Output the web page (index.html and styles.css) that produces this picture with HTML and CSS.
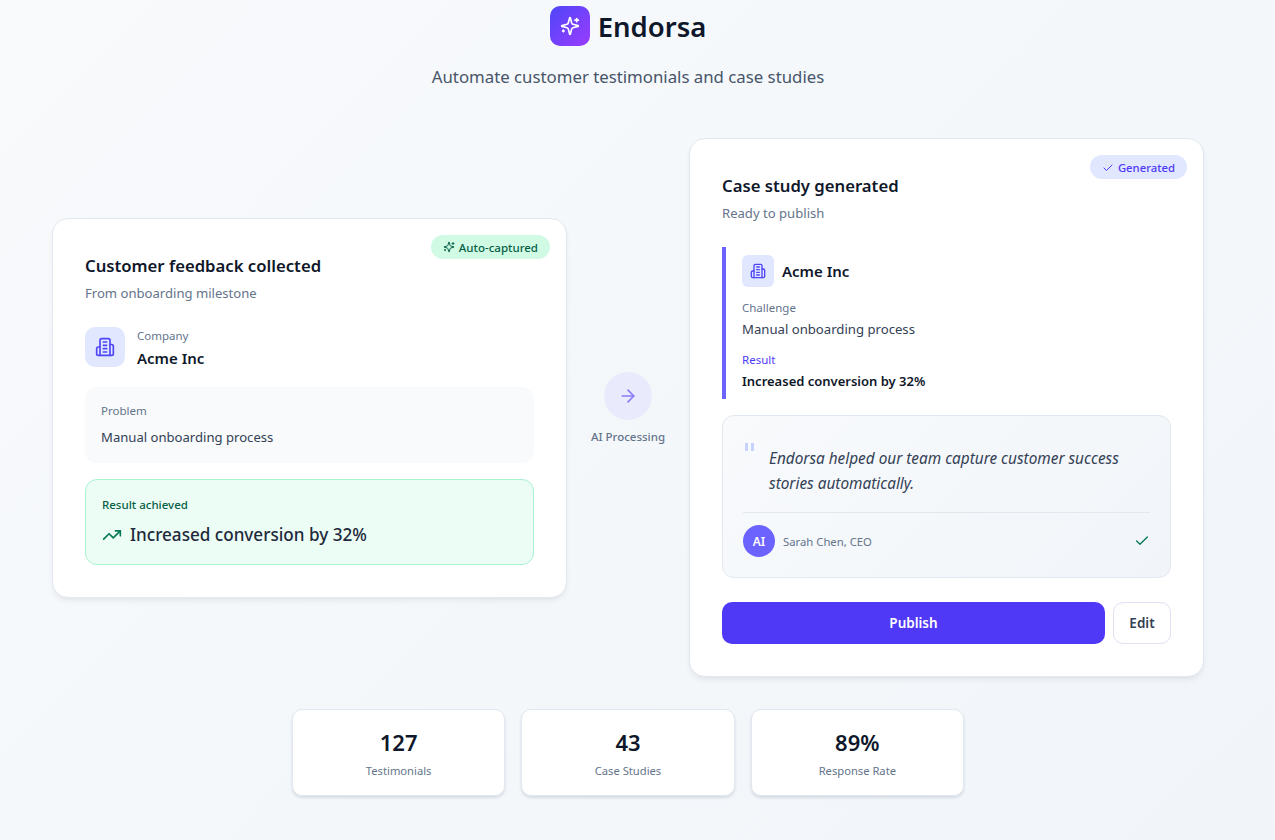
FILE: index.html
```html
<!DOCTYPE html>
<html lang="en">
<head>
    <meta charset="UTF-8">
    <meta name="viewport" content="width=device-width, initial-scale=1.0">
    <title>Endorsa</title>
    <link rel="stylesheet" href="styles.css">
</head>
<body>
    <div class="page">
        <header class="header">
            <div class="brand">
                <div class="brand-icon">
                    <svg class="icon" width="20" height="20" viewBox="0 0 24 24"><path d="M9.937 15.5A2 2 0 0 0 8.5 14.063l-6.135-1.582a.5.5 0 0 1 0-.962L8.5 9.936A2 2 0 0 0 9.937 8.5l1.582-6.135a.5.5 0 0 1 .963 0L14.063 8.5A2 2 0 0 0 15.5 9.937l6.135 1.581a.5.5 0 0 1 0 .964L15.5 14.063a2 2 0 0 0-1.437 1.437l-1.582 6.135a.5.5 0 0 1-.963 0z"/><path d="M20 3v4"/><path d="M22 5h-4"/><path d="M4 17v2"/><path d="M5 18H3"/></svg>
                </div>
                <h1>Endorsa</h1>
            </div>
            <p class="tagline">Automate customer testimonials and case studies</p>
        </header>

        <main class="workflow">
            <section class="card">
                <span class="badge badge-green">
                    <svg class="icon" width="12" height="12" viewBox="0 0 24 24"><path d="M9.937 15.5A2 2 0 0 0 8.5 14.063l-6.135-1.582a.5.5 0 0 1 0-.962L8.5 9.936A2 2 0 0 0 9.937 8.5l1.582-6.135a.5.5 0 0 1 .963 0L14.063 8.5A2 2 0 0 0 15.5 9.937l6.135 1.581a.5.5 0 0 1 0 .964L15.5 14.063a2 2 0 0 0-1.437 1.437l-1.582 6.135a.5.5 0 0 1-.963 0z"/><path d="M20 3v4"/><path d="M22 5h-4"/><path d="M4 17v2"/><path d="M5 18H3"/></svg>
                    Auto-captured
                </span>
                <h2 class="card-title">Customer feedback collected</h2>
                <p class="card-sub">From onboarding milestone</p>

                <div class="company">
                    <div class="company-icon">
                        <svg class="icon" width="20" height="20" viewBox="0 0 24 24"><path d="M6 22V4a2 2 0 0 1 2-2h8a2 2 0 0 1 2 2v18Z"/><path d="M6 12H4a2 2 0 0 0-2 2v6a2 2 0 0 0 2 2h2"/><path d="M18 9h2a2 2 0 0 1 2 2v9a2 2 0 0 1-2 2h-2"/><path d="M10 6h4"/><path d="M10 10h4"/><path d="M10 14h4"/><path d="M10 18h4"/></svg>
                    </div>
                    <div>
                        <div class="label">Company</div>
                        <div class="company-name company-name-stacked">Acme Inc</div>
                    </div>
                </div>

                <div class="problem">
                    <div class="label">Problem</div>
                    <div class="problem-text">Manual onboarding process</div>
                </div>

                <div class="result">
                    <div class="result-label">Result achieved</div>
                    <div class="result-text">
                        <svg class="icon" width="20" height="20" viewBox="0 0 24 24"><polyline points="22 7 13.5 15.5 8.5 10.5 2 17"/><polyline points="16 7 22 7 22 13"/></svg>
                        Increased conversion by 32%
                    </div>
                </div>
            </section>

            <div class="processing">
                <div class="processing-circle">
                    <svg class="icon" width="20" height="20" viewBox="0 0 24 24"><path d="M5 12h14"/><path d="m12 5 7 7-7 7"/></svg>
                </div>
                <span class="processing-label">AI Processing</span>
            </div>

            <section class="card">
                <span class="badge badge-blue">
                    <svg class="icon" width="12" height="12" viewBox="0 0 24 24"><path d="M20 6 9 17l-5-5"/></svg>
                    Generated
                </span>
                <h2 class="card-title">Case study generated</h2>
                <p class="card-sub">Ready to publish</p>

                <div class="summary">
                    <div class="summary-head">
                        <div class="summary-icon">
                            <svg class="icon" width="16" height="16" viewBox="0 0 24 24"><path d="M6 22V4a2 2 0 0 1 2-2h8a2 2 0 0 1 2 2v18Z"/><path d="M6 12H4a2 2 0 0 0-2 2v6a2 2 0 0 0 2 2h2"/><path d="M18 9h2a2 2 0 0 1 2 2v9a2 2 0 0 1-2 2h-2"/><path d="M10 6h4"/><path d="M10 10h4"/><path d="M10 14h4"/><path d="M10 18h4"/></svg>
                        </div>
                        <span class="company-name">Acme Inc</span>
                    </div>
                    <div class="label">Challenge</div>
                    <div class="summary-text">Manual onboarding process</div>
                    <div class="label label-accent">Result</div>
                    <div class="summary-text summary-strong">Increased conversion by 32%</div>
                </div>

                <div class="quote">
                    <div class="quote-mark"><i></i><i></i></div>
                    <p class="quote-text">Endorsa helped our team capture customer success stories automatically.</p>
                    <div class="quote-foot">
                        <div class="avatar">AI</div>
                        <span class="quote-author">Sarah Chen, CEO</span>
                        <svg class="icon quote-check" width="16" height="16" viewBox="0 0 24 24"><path d="M20 6 9 17l-5-5"/></svg>
                    </div>
                </div>

                <div class="actions">
                    <button class="btn-publish">Publish</button>
                    <button class="btn-edit">Edit</button>
                </div>
            </section>
        </main>

        <div class="stats">
            <div class="stat">
                <div class="stat-value">127</div>
                <div class="stat-label">Testimonials</div>
            </div>
            <div class="stat">
                <div class="stat-value">43</div>
                <div class="stat-label">Case Studies</div>
            </div>
            <div class="stat">
                <div class="stat-value">89%</div>
                <div class="stat-label">Response Rate</div>
            </div>
        </div>
    </div>
</body>
</html>
```

FILE: styles.css
```css
* {
    box-sizing: border-box;
}

html {
    height: 100%;
}

body {
    margin: 0;
    min-height: 100%;
    font-family: "Noto Sans", "Open Sans", sans-serif;
    color: #0f172a;
    background: linear-gradient(135deg, #f8fafc, #f1f5f9);
}

.page {
    width: 1152px;
    margin-left: 52px;
    padding-top: 6px;
}

.icon {
    fill: none;
    stroke: currentColor;
    stroke-width: 2;
    stroke-linecap: round;
    stroke-linejoin: round;
    flex-shrink: 0;
}

.header {
    text-align: center;
    margin-bottom: 48px;
}

.brand {
    display: flex;
    justify-content: center;
    align-items: center;
    gap: 8px;
}

.brand-icon {
    width: 40px;
    height: 40px;
    border-radius: 10px;
    display: flex;
    justify-content: center;
    align-items: center;
    color: #fff;
    background: linear-gradient(135deg, #4f46f8, #9a3cff);
}

.brand h1 {
    margin: 0;
    padding-top: 2px;
    font-size: 27.5px;
    line-height: 38px;
    font-weight: 600;
}

.tagline {
    margin: 18px 0 0;
    font-size: 16.8px;
    line-height: 26px;
    color: #475569;
}

.workflow {
    display: grid;
    grid-template-columns: 515px 1fr 515px;
    align-items: center;
}

.card {
    position: relative;
    background: #fff;
    border: 1px solid #e2e8f0;
    border-radius: 16px;
    padding: 32px;
    box-shadow: 0 4px 6px -1px rgba(15, 23, 42, 0.06), 0 2px 4px -2px rgba(15, 23, 42, 0.05);
}

.badge {
    position: absolute;
    top: 16px;
    right: 16px;
    height: 24px;
    padding: 1px 12px 0;
    border-radius: 12px;
    display: flex;
    align-items: center;
    gap: 4px;
    font-size: 11.5px;
    font-weight: 500;
}

.badge-green {
    background: #d1fae5;
    color: #065f46;
}

.badge-blue {
    font-size: 11.3px;
    background: #e0e7ff;
    color: #4f39f6;
}

.card-title {
    margin: 1px 0 0;
    font-size: 16.7px;
    line-height: 28px;
    font-weight: 600;
}

.card-sub {
    margin: 3px 0 0;
    font-size: 13.1px;
    line-height: 20px;
    color: #64748b;
}

.company {
    display: flex;
    align-items: flex-start;
    gap: 12px;
    height: 40px;
    margin-top: 24px;
}

.company-icon {
    width: 40px;
    height: 40px;
    border-radius: 10px;
    display: flex;
    justify-content: center;
    align-items: center;
    background: #e0e7ff;
    color: #4f46f5;
}

.label {
    font-size: 11.5px;
    line-height: 18px;
    color: #64748b;
}

.company-name {
    font-size: 15px;
    line-height: 24px;
    font-weight: 600;
}

.company-name-stacked {
    margin-top: 1px;
}

.problem {
    margin-top: 20px;
    height: 76px;
    padding: 15px 16px;
    background: #f8fafc;
    border-radius: 12px;
}

.problem-text {
    margin-top: 7px;
    font-size: 13.1px;
    line-height: 20px;
    color: #334155;
}

.result {
    margin-top: 16px;
    height: 86px;
    padding: 16px;
    background: #ecfdf5;
    border: 1px solid #a7f3d0;
    border-radius: 12px;
}

.result-label {
    font-size: 11.5px;
    line-height: 18px;
    font-weight: 500;
    color: #065f46;
}

.result-text {
    display: flex;
    align-items: center;
    gap: 8px;
    margin-top: 7px;
    font-size: 17.1px;
    line-height: 28px;
    font-weight: 500;
    color: #1e293b;
}

.result-text .icon {
    color: #047857;
}

.processing {
    display: flex;
    flex-direction: column;
    align-items: center;
    gap: 8px;
    padding-top: 3px;
}

.processing-circle {
    width: 48px;
    height: 48px;
    border-radius: 50%;
    display: flex;
    justify-content: center;
    align-items: center;
    background: #eaeafd;
    color: #8b7cf6;
}

.processing-label {
    font-size: 11.5px;
    line-height: 18px;
    font-weight: 500;
    color: #64748b;
}

.summary {
    margin-top: 24px;
    padding: 8px 0 8px 16px;
    border-left: 4px solid #6c63ff;
}

.summary-head {
    display: flex;
    align-items: center;
    gap: 8px;
    margin-bottom: 12px;
}

.summary-icon {
    width: 32px;
    height: 32px;
    border-radius: 6px;
    display: flex;
    justify-content: center;
    align-items: center;
    background: #e0e7ff;
    color: #4f46f5;
}

.summary-text {
    margin-top: 2px;
    font-size: 13.15px;
    line-height: 20px;
    color: #334155;
}

.summary-strong {
    font-size: 13px;
    font-weight: 600;
    color: #0f172a;
}

.label-accent {
    margin-top: 12px;
    color: #4f39f6;
}

.quote {
    position: relative;
    margin-top: 16px;
    padding: 30px 20px 20px;
    border: 1px solid #e2e8f0;
    border-radius: 12px;
    background: linear-gradient(135deg, #f8fafc, #f1f5f9);
}

.quote-mark {
    position: absolute;
    top: 27px;
    left: 22px;
    display: flex;
    gap: 3px;
}

.quote-mark i {
    width: 3px;
    height: 8px;
    background: #c7d2fe;
}

.quote-text {
    margin: 0;
    padding-left: 26px;
    font-size: 15.35px;
    line-height: 25px;
    font-style: italic;
    color: #334155;
}

.quote-foot {
    display: flex;
    align-items: center;
    gap: 8px;
    margin-top: 16px;
    padding-top: 12px;
    border-top: 1px solid #e2e8f0;
}

.avatar {
    width: 32px;
    height: 32px;
    border-radius: 50%;
    display: flex;
    justify-content: center;
    align-items: center;
    background: #6c63ff;
    color: #fff;
    font-size: 12px;
    font-weight: 600;
}

.quote-author {
    font-size: 11.3px;
    color: #64748b;
}

.quote-check {
    margin-left: auto;
    color: #047857;
}

.actions {
    display: flex;
    gap: 8px;
    margin-top: 24px;
}

.btn-publish,
.btn-edit {
    height: 42px;
    border-radius: 10px;
    font-family: inherit;
    font-size: 13.5px;
    font-weight: 600;
    cursor: pointer;
}

.btn-publish {
    flex: 1;
    border: none;
    background: #4f39f6;
    color: #fff;
}

.btn-edit {
    width: 58px;
    background: #fff;
    border: 1px solid #dfe1f5;
    color: #334155;
}

.stats {
    display: grid;
    grid-template-columns: repeat(3, 1fr);
    gap: 16px;
    width: 672px;
    margin: 32px auto 0;
}

.stat {
    height: 87px;
    padding-top: 17px;
    text-align: center;
    background: #fff;
    border: 1px solid #e2e8f0;
    border-radius: 10px;
    box-shadow: 0 2px 3px rgba(100, 116, 139, 0.2);
}

.stat-value {
    font-size: 22px;
    line-height: 30px;
    font-weight: 600;
}

.stat-label {
    margin-top: 6px;
    font-size: 11.2px;
    line-height: 16px;
    color: #64748b;
}
```
